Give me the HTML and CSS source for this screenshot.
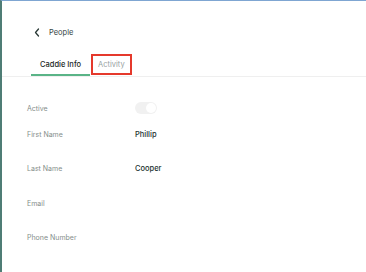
FILE: index.html
```html
<!DOCTYPE html>
<html lang="en">
<head>
    <meta charset="UTF-8">
    <meta name="viewport" content="width=device-width, initial-scale=1.0">
    <title>Caddie Info</title>
    <link rel="stylesheet" href="styles.css">
</head>
<body>
    <div class="page">
        <div class="header">
            <svg class="back" width="6" height="9" viewBox="0 0 6 9">
                <path d="M4.5 1 L1.5 4.5 L4.5 8" fill="none" stroke="#2b3a37" stroke-width="1.3" stroke-linecap="round" stroke-linejoin="round"/>
            </svg>
            <span class="crumb">People</span>
        </div>

        <div class="tabs">
            <div class="tab active">Caddie Info</div>
            <div class="tab marked">Activity</div>
        </div>

        <div class="form">
            <div class="row short">
                <div class="label">Active</div>
                <div class="toggle"><span class="knob"></span></div>
            </div>
            <div class="row">
                <div class="label">First Name</div>
                <div class="value">Phillip</div>
            </div>
            <div class="row">
                <div class="label">Last Name</div>
                <div class="value">Cooper</div>
            </div>
            <div class="row">
                <div class="label">Email</div>
                <div class="value"></div>
            </div>
            <div class="row">
                <div class="label">Phone Number</div>
                <div class="value"></div>
            </div>
        </div>
    </div>
</body>
</html>
```

FILE: styles.css
```css
body {
    margin: 0;
    font-family: Inter, "Noto Sans", sans-serif;
    background-color: white;
}
.page {
    box-sizing: border-box;
    height: 100vh;
    border-top: 1px solid #7fa6d2;
    border-left: 2px solid #4f7d75;
}
.header {
    display: flex;
    align-items: center;
    gap: 9px;
    height: 12px;
    padding: 25px 0 0 32px;
}
.crumb {
    font-size: 7.5px;
    color: #34433f;
}
.tabs {
    display: flex;
    gap: 1px;
    margin-top: 16px;
    padding-left: 29px;
    border-bottom: 1px solid #efefef;
}
.tab {
    box-sizing: border-box;
    height: 22px;
    display: flex;
    align-items: center;
    font-size: 7.5px;
}
.tab.active {
    padding: 0 9px;
    color: #1c2926;
    font-weight: 500;
    border-bottom: 2px solid #5ab487;
}
.tab.marked {
    padding: 0 5px;
    height: 21px;
    color: #98a19f;
    border: 2px solid #e5392c;
}
.form {
    padding: 22px 0 0 25px;
}
.row {
    display: grid;
    grid-template-columns: 108px 1fr;
    align-items: center;
    height: 34.5px;
}
.row.short {
    height: 18px;
}
.label {
    font-size: 7px;
    color: #858e8b;
}
.value {
    font-size: 7.5px;
    font-weight: 500;
    color: #233230;
}
.toggle {
    width: 22px;
    height: 12px;
    border-radius: 6px;
    background-color: #f1f1f1;
    position: relative;
}
.knob {
    position: absolute;
    right: 1px;
    top: 1px;
    width: 10px;
    height: 10px;
    border-radius: 50%;
    background-color: white;
}
```
